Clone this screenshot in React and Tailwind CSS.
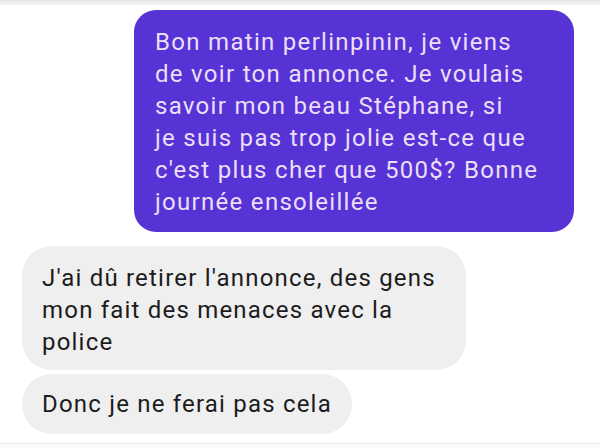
export default function App() {
  return (
    <div
      className="w-[600px] h-[448px] bg-white overflow-hidden flex flex-col"
      style={{ fontFamily: "Roboto, 'Liberation Sans', sans-serif" }}
    >
      {/* top edge of the screen */}
      <div className="h-[5px] bg-gradient-to-b from-[#e6e6e6] to-[#f6f6f6]" />

      <div className="flex flex-col pt-[5px]">
        {/* sent */}
        <div className="flex justify-end pr-[26px]">
          <div className="w-[440px] bg-[#5733d6] text-[#eadff7] rounded-[22px] pl-[21px] pr-2 pt-[16px] pb-[14px] text-[24px] leading-[32px] tracking-[1.3px]">
            Bon matin perlinpinin, je viens
            <br />
            de voir ton annonce. Je voulais
            <br />
            savoir mon beau Stéphane, si
            <br />
            je suis pas trop jolie est-ce que
            <br />
            c'est plus cher que 500$? Bonne
            <br />
            journée ensoleillée
          </div>
        </div>

        {/* received */}
        <div className="flex flex-col items-start gap-[4px] pl-[22px] mt-[14px]">
          <div className="w-[444px] bg-[#efefef] text-[#1c1c1c] rounded-[30px] pl-5 pr-2 pt-[16px] pb-[12px] text-[24px] leading-[32px] tracking-[1.2px]">
            J'ai dû retirer l'annonce, des gens
            <br />
            mon fait des menaces avec la
            <br />
            police
          </div>
          <div className="bg-[#efefef] text-[#1c1c1c] rounded-[30px] pl-5 pr-5 py-[14px] text-[24px] leading-[32px] tracking-[1.2px]">
            Donc je ne ferai pas cela
          </div>
        </div>
      </div>

      <div className="mt-auto h-[5px] border-t border-[#e8e8e8] bg-[#fafafa]" />
    </div>
  );
}
